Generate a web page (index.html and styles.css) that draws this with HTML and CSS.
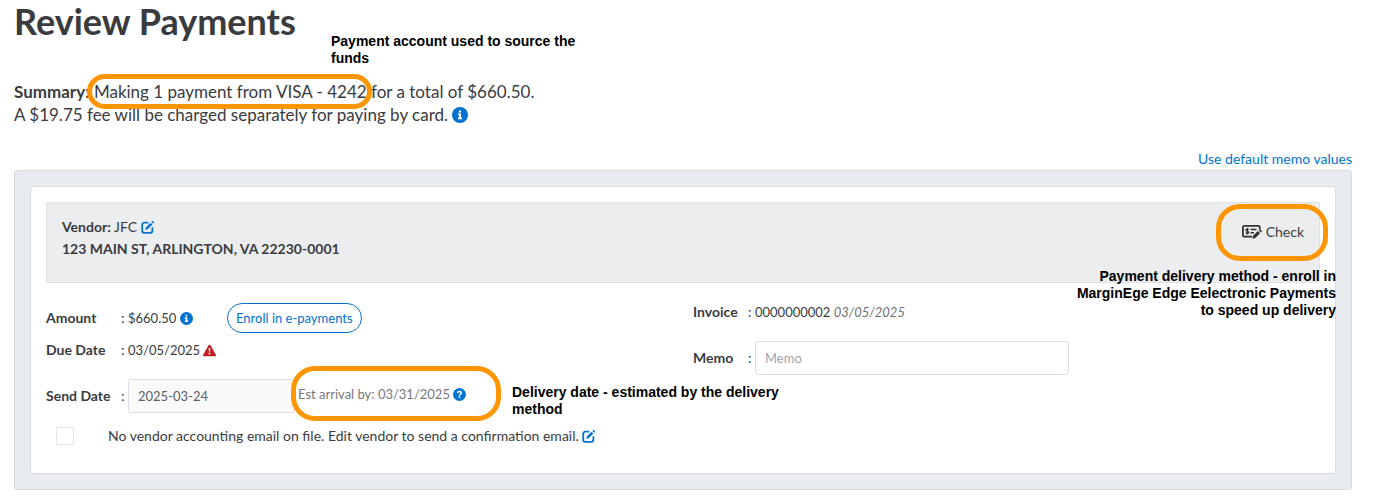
FILE: index.html
```html
<!DOCTYPE html>
<html lang="en">
<head>
    <meta charset="UTF-8">
    <meta name="viewport" content="width=device-width, initial-scale=1.0">
    <title>Review Payments</title>
    <link rel="stylesheet" href="styles.css">
</head>
<body>
    <svg class="defs" aria-hidden="true">
        <symbol id="info" viewBox="0 0 16 16">
            <circle cx="8" cy="8" r="8" fill="currentColor"/>
            <path fill="#fff" d="M7 3.4h2v2H7zM6 6.6h3v4h1v1.6H6v-1.6h1V8.200H6z"/>
        </symbol>
        <symbol id="question" viewBox="0 0 16 16">
            <circle cx="8" cy="8" r="8" fill="currentColor"/>
            <path fill="none" stroke="#fff" stroke-width="1.800" d="M5.700 6.300c0-1.500 1-2.100 2.300-2.100s2.300.7 2.300 1.900c0 1.500-2.300 1.400-2.300 3.300"/>
            <path fill="#fff" d="M7 10.400h2v2H7z"/>
        </symbol>
        <symbol id="warning" viewBox="0 0 16 14">
            <path fill="currentColor" d="M8 0c.5 0 .9.200 1.100.6l6.700 11.500c.5.900-.1 1.900-1.100 1.900H1.300c-1 0-1.600-1-1.100-1.900L6.900.6C7.100.2 7.500 0 8 0z"/>
            <path fill="#fff" d="M7 4h2l-.3 4.600H7.300zM7 9.900h2v2H7z"/>
        </symbol>
        <symbol id="edit" viewBox="0 0 16 16">
            <path fill="none" stroke="currentColor" stroke-width="2.200" stroke-linecap="round" d="M8 2.100H4A2.500 2.500 0 0 0 1.500 4.600v7.500A2.500 2.500 0 0 0 4 14.600h7.500a2.500 2.500 0 0 0 2.500-2.500V8.500"/>
            <path fill="currentColor" d="M11.800 2l2.300 2.300-5.900 5.900-3 .7.700-3zM12.800 1l.6-.6c.4-.4 1-.4 1.400 0l.9.900c.4.400.4 1 0 1.400l-.6.600z"/>
        </symbol>
        <symbol id="check" viewBox="0 0 20 14">
            <path fill="none" stroke="currentColor" stroke-width="1.800" d="M17.800 4V2.300C17.800 1.400 17.300.9 16.500.9H2.200C1.300.9.9 1.400.9 2.300v7.900c0 .9.400 1.400 1.300 1.400h8"/>
            <path fill="none" stroke="currentColor" stroke-width="1.300" d="M6.700 4.400C5.800 3.800 3.800 3.800 3.800 5s3 1 3 2.300-2.200 1.300-3.200.5M5.300 3v6.500"/>
            <path fill="none" stroke="currentColor" stroke-width="1.500" d="M8.500 4.500h6M8.500 7.700h3.500"/>
            <path fill="currentColor" d="M15.800 6l2.300 2.300-4.700 4.700-3 .8.700-3.100zM16.600 5.200l.6-.6c.4-.4.900-.4 1.300 0l1 1c.4.400.4.900 0 1.300l-.6.600z"/>
        </symbol>
    </svg>

    <main class="page">
        <h1>Review Payments</h1>

        <div class="summary">
            <b>Summary:</b> <span class="ringed ring-pill">Making 1 payment from VISA - 4242</span> for a total of $660.50.<br>
            A $19.75 fee will be charged separately for paying by card. <svg class="icon icon-lg"><use href="#info"/></svg>
        </div>

        <div class="actions"><a href="#">Use default memo values</a></div>

        <section class="panel">
            <div class="card">
                <div class="vendor">
                    <div>
                        <b>Vendor:</b> JFC <a href="#" aria-label="Edit vendor"><svg class="icon"><use href="#edit"/></svg></a><br>
                        <b>123 MAIN ST, ARLINGTON, VA 22230-0001</b>
                    </div>
                    <div class="method ringed ring-method">
                        <svg class="icon icon-check"><use href="#check"/></svg> Check
                    </div>
                    <p class="note note-method">Payment delivery method - enroll in MarginEge Edge Eelectronic Payments to speed up delivery</p>
                </div>

                <div class="details">
                    <div class="col">
                        <div class="row row-amount">
                            <b class="label">Amount</b><span class="colon">:</span>
                            <span class="value amount">$660.50 <svg class="icon"><use href="#info"/></svg></span>
                            <button type="button" class="enroll">Enroll in e-payments</button>
                        </div>
                        <div class="row row-due">
                            <b class="label">Due Date</b><span class="colon">:</span>
                            <span class="value">03/05/2025 <svg class="icon warning"><use href="#warning"/></svg></span>
                        </div>
                        <div class="row row-send">
                            <label class="label" for="send-date">Send Date</label><span class="colon">:</span>
                            <input class="field send-date" id="send-date" type="text" value="2025-03-24" readonly>
                            <span class="value arrival ringed ring-arrival">Est arrival by: 03/31/2025 <svg class="icon"><use href="#question"/></svg></span>
                            <p class="note note-arrival">Delivery date - estimated by the delivery method</p>
                        </div>
                        <div class="row row-email">
                            <input class="tick" id="send-email" type="checkbox" disabled>
                            <label for="send-email">No vendor accounting email on file. Edit vendor to send a confirmation email. <a href="#" aria-label="Edit vendor email"><svg class="icon"><use href="#edit"/></svg></a></label>
                        </div>
                    </div>
                    <div class="col col-invoice">
                        <div class="row row-invoice">
                            <b class="label">Invoice</b><span class="colon">:</span>
                            <span class="value">0000000002 <i>03/05/2025</i></span>
                        </div>
                        <div class="row row-memo">
                            <label class="label" for="memo">Memo</label><span class="colon">:</span>
                            <input class="field memo" id="memo" type="text" placeholder="Memo">
                        </div>
                    </div>
                </div>
            </div>
        </section>

        <p class="note note-account">Payment account used to source the funds</p>
    </main>
</body>
</html>
```
FILE: styles.css
```css
* {
    box-sizing: border-box;
}
body {
    margin: 0;
    background-color: #fff;
    color: #3a3b3f;
    font-family: Lato, "Open Sans", sans-serif;
    font-size: 14px;
    line-height: 22px;
}
a {
    color: #0272cf;
    text-decoration: none;
}
.defs {
    display: none;
}
.page {
    position: relative;
    padding: 0 28px 9px 14px;
}
h1 {
    margin: 0 0 38px;
    font-size: 36px;
    line-height: 42px;
}
.summary {
    font-size: 17px;
    line-height: 23px;
}
.actions {
    margin-top: 22px;
    text-align: right;
}
.icon {
    width: 13px;
    height: 13px;
    vertical-align: -2px;
    color: #0272cf;
}
.icon-lg {
    width: 16px;
    height: 16px;
}
.icon-check {
    width: 20px;
    height: 14px;
    color: #333;
}
.warning {
    color: #c01c20;
}

.panel {
    padding: 15px;
    background-color: #e8ebf0;
    border: 1px solid #d9dbde;
    border-radius: 3px;
}
.card {
    padding: 15px 15px 26px;
    background-color: #fff;
    border: 1px solid #d9dbde;
    border-radius: 3px;
}
.vendor {
    position: relative;
    display: flex;
    justify-content: space-between;
    align-items: flex-start;
    padding: 13px 15px 22px;
    background-color: #ecedef;
    border: 1px solid #dfe0e4;
    border-radius: 2px;
}
.method {
    margin-top: 5px;
}
.details {
    display: grid;
    grid-template-columns: 1fr 1fr;
    column-gap: 20px;
    padding-top: 20px;
}
.row {
    display: flex;
    align-items: center;
    position: relative;
}
.label {
    width: 75px;
    font-weight: bold;
}
.col-invoice .label {
    width: 55px;
}
.colon {
    width: 7px;
}
.value {
    font-size: 13px;
}
.amount {
    width: 99px;
}
.enroll {
    height: 30px;
    padding: 0 8px;
    background-color: #fff;
    border: 1px solid #0272cf;
    border-radius: 15px;
    color: #0272cf;
    font: 13px Lato, "Open Sans", sans-serif;
}
.row-due {
    margin-top: 6px;
}
.row-send {
    margin-top: 18px;
}
.row-email {
    margin-top: 12px;
}
.row-invoice {
    line-height: 18px;
}
.row-memo {
    margin-top: 20px;
}
.field {
    height: 34px;
    padding: 0 9px;
    background-color: #fff;
    border: 1px solid #dddde5;
    border-radius: 3px;
    color: #5c5f6b;
    font: 13px Lato, "Open Sans", sans-serif;
}
.field::placeholder {
    color: #a3a3ad;
}
.send-date {
    width: 167px;
    background-color: #fafafa;
}
.memo {
    width: 50%;
}
.arrival {
    margin: 0 0 4px 3px;
    color: #77787b;
}
i {
    color: #6f7073;
}
.tick {
    appearance: none;
    width: 18px;
    height: 18px;
    margin: 0 34px 0 10px;
    background-color: #fff;
    border: 1px solid #e6e6e8;
}

/* orange callouts */
.ringed {
    position: relative;
}
.ringed::after {
    content: "";
    position: absolute;
    z-index: 1;
    border: 5px solid #ff9500;
    border-radius: 24px;
}
.ring-pill::after {
    inset: -7px -5px -7px -7px;
}
.ring-method::after {
    inset: -17px -24px -18px -26px;
}
.ring-arrival::after {
    inset: -17px -35px -16px -7px;
}
.note {
    position: absolute;
    z-index: 1;
    margin: 0;
    color: #000;
    font: bold 14px/17px "Liberation Sans", Arial, sans-serif;
}
.note-account {
    top: 33px;
    left: 331px;
    width: 250px;
}
.note-method {
    top: 65px;
    right: -17px;
    width: 270px;
    text-align: right;
}
.note-arrival {
    top: 5px;
    left: 466px;
    width: 280px;
}
```
